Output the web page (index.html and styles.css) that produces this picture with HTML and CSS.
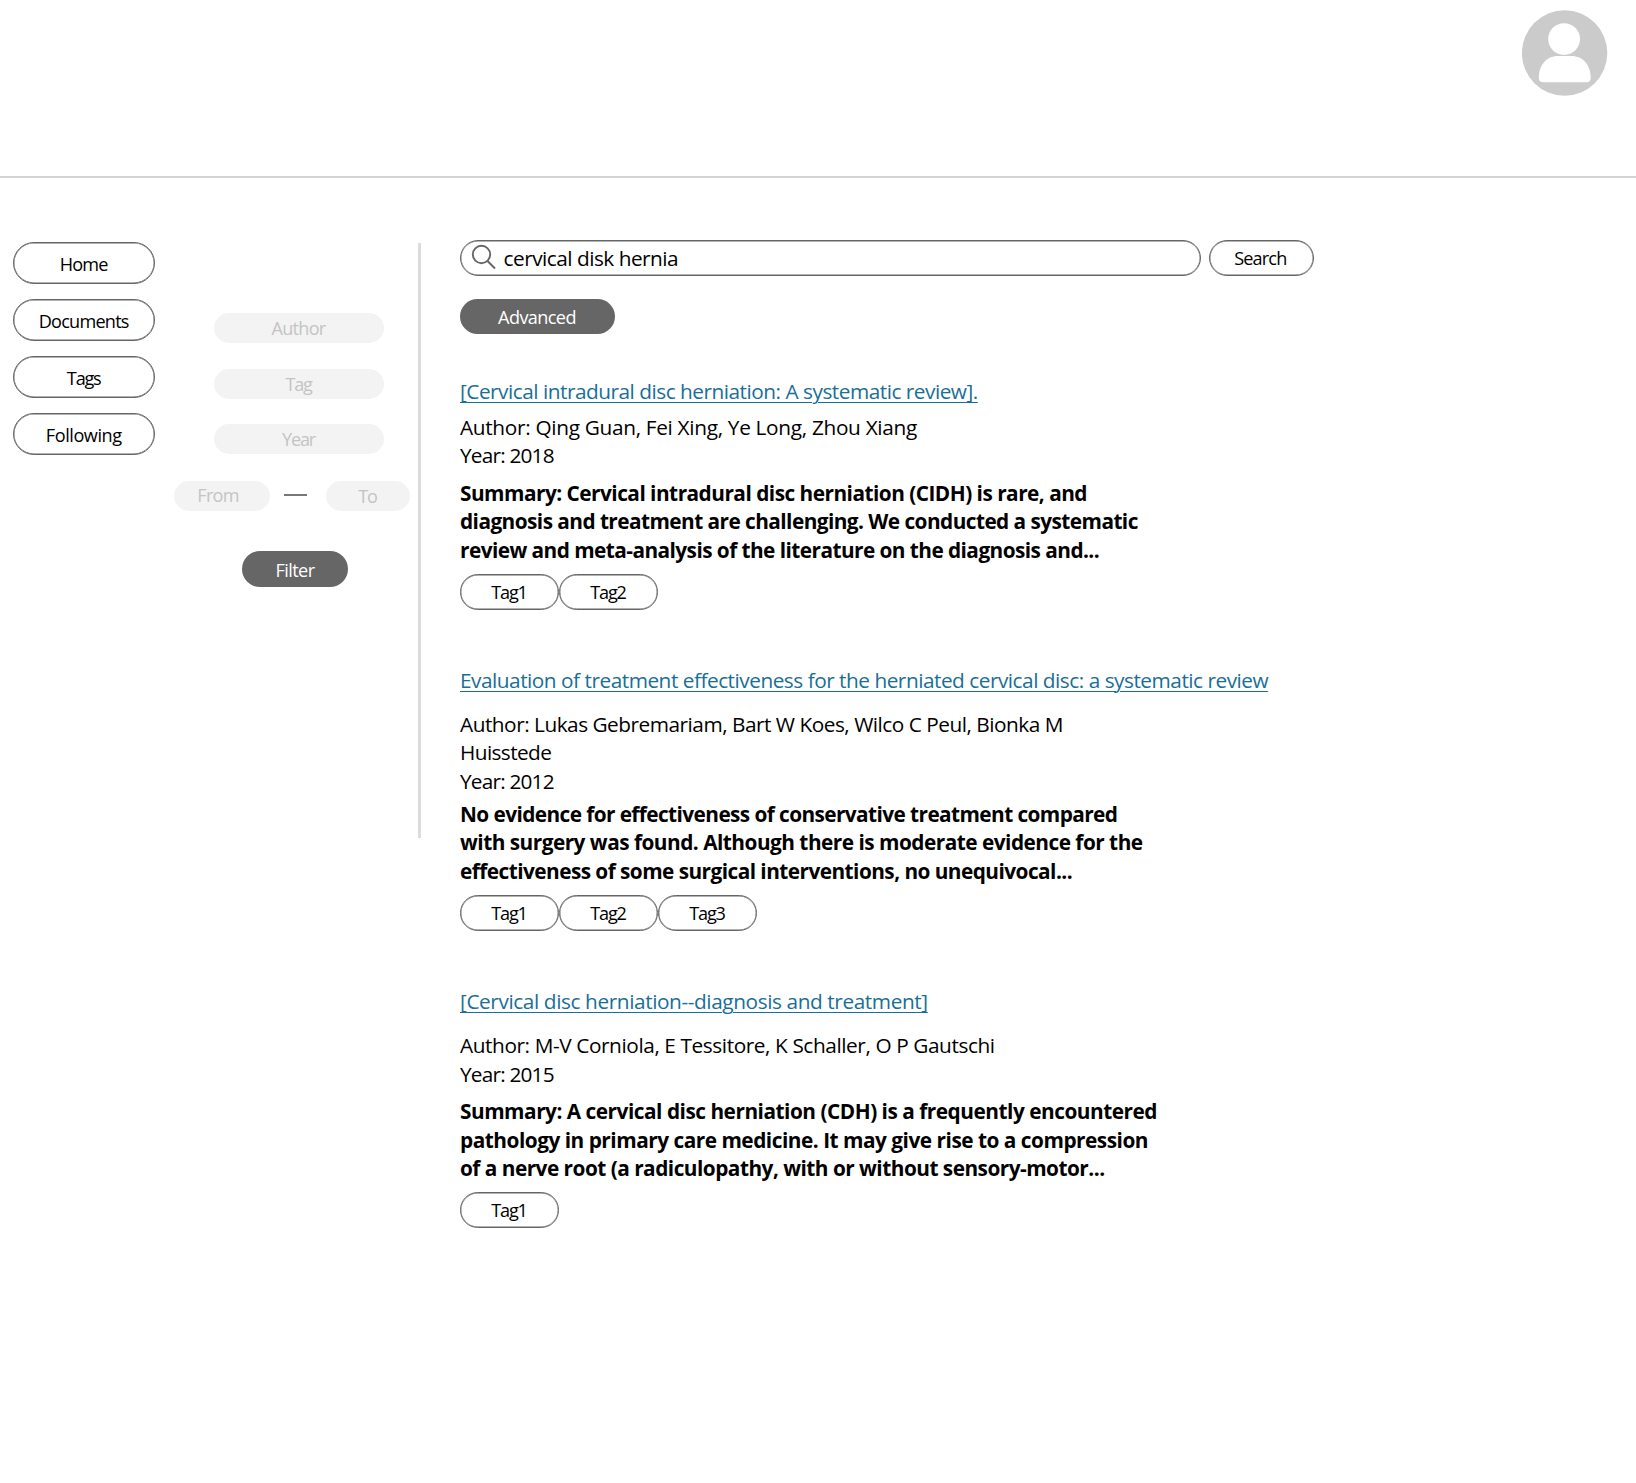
FILE: index.html
```
<!DOCTYPE html>
<html lang="en">
<head>
<meta charset="utf-8">
<title>Document search</title>
<link rel="stylesheet" href="styles.css">
</head>
<body>
<header class="topbar">
  <svg class="avatar" viewBox="0 0 86 86" aria-hidden="true">
    <circle cx="42.600" cy="43" r="42.700" fill="#cbcbcb"/>
    <circle cx="42.100" cy="29.100" r="15.900" fill="#fff"/>
    <path d="M16.800 68C16.800 55 24.500 46 36 46H49.500C61 46 68.700 55 68.700 68Q68.700 72.300 64 72.300H21.500Q16.800 72.300 16.800 68Z" fill="#fff"/>
  </svg>
</header>
<div class="layout">
  <nav class="nav">
    <a class="pill">Home</a>
    <a class="pill">Documents</a>
    <a class="pill tight">Tags</a>
    <a class="pill loose">Following</a>
  </nav>
  <aside class="filters">
    <div class="field">Author</div>
    <div class="field tight">Tag</div>
    <div class="field tight">Year</div>
    <div class="range">
      <div class="field from">From</div>
      <i class="dash"></i>
      <div class="field to tight">To</div>
    </div>
    <button class="solid filter">Filter</button>
  </aside>
  <main class="content">
    <div class="searchrow">
      <div class="searchbox">
        <svg class="glass" viewBox="0 0 26 26" aria-hidden="true"><circle cx="10.500" cy="10.500" r="8.700"/><path d="M16.500 17L24 24.500"/></svg>
        <span>cervical disk hernia</span>
      </div>
      <button class="searchbtn">Search</button>
    </div>
    <button class="solid advanced">Advanced</button>

    <article class="result first">
      <h2><a>[Cervical intradural disc herniation: A systematic review].</a></h2>
      <div class="meta"><span>Author: Qing Guan, Fei Xing, Ye Long, Zhou Xiang</span><span class="year">Year: 2018</span></div>
      <div class="summary"><span>Summary: Cervical intradural disc herniation (CIDH) is rare, and</span><span>diagnosis and treatment are challenging. We conducted a systematic</span><span>review and meta-analysis of the literature on the diagnosis and...</span></div>
      <div class="tags"><a>Tag1</a><a>Tag2</a></div>
    </article>
    <article class="result second">
      <h2><a>Evaluation of treatment effectiveness for the herniated cervical disc: a systematic review</a></h2>
      <div class="meta"><span>Author: Lukas Gebremariam, Bart W Koes, Wilco C Peul, Bionka M</span><span class="wrapped">Huisstede</span><span class="year">Year: 2012</span></div>
      <div class="summary"><span>No evidence for effectiveness of conservative treatment compared</span><span>with surgery was found. Although there is moderate evidence for the</span><span>effectiveness of some surgical interventions, no unequivocal...</span></div>
      <div class="tags"><a>Tag1</a><a>Tag2</a><a>Tag3</a></div>
    </article>
    <article class="result third">
      <h2><a>[Cervical disc herniation--diagnosis and treatment]</a></h2>
      <div class="meta"><span>Author: M-V Corniola, E Tessitore, K Schaller, O P Gautschi</span><span class="year">Year: 2015</span></div>
      <div class="summary"><span>Summary: A cervical disc herniation (CDH) is a frequently encountered</span><span>pathology in primary care medicine. It may give rise to a compression</span><span>of a nerve root (a radiculopathy, with or without sensory-motor...</span></div>
      <div class="tags"><a>Tag1</a></div>
    </article>
  </main>
</div>
</body>
</html>
```
FILE: styles.css
```
* { box-sizing: border-box; }
body { margin: 0; background: #fff; color: #000; font-family: "Open Sans", "Noto Sans", sans-serif; font-size: 18.1px; letter-spacing: -0.75px; }
button { font: inherit; letter-spacing: inherit; padding: 0; border: 0; background: none; color: #000; }
.topbar { height: 178px; border-bottom: 2px solid #d4d4d4; padding: 9.600px 28px 0 0; display: flex; justify-content: flex-end; }
.avatar { width: 86px; height: 86px; }
.layout { display: grid; grid-template-columns: 173.500px 247.500px 1fr; padding-top: 61px; align-items: start; }
.nav { display: flex; flex-direction: column; gap: 15px; padding: 3.400px 0 0 13px; width: 155.400px; }
.pill, .tags a, .searchbtn, .searchbox { border: 1px solid #666; box-shadow: inset 0 0 0 0.400px #666; display: flex; align-items: center; justify-content: center; }
.pill { height: 42px; border-radius: 21px; padding: 1px 1px 0 0; }
.tight, .tags a { letter-spacing: -1.200px; }
.loose { letter-spacing: -0.450px; }
.filters { margin-top: 3.500px; height: 595.500px; border-right: 3px solid #dcdcdc; padding-top: 70.500px; display: flex; flex-direction: column; align-items: center; }
.field { width: 170px; height: 30px; border-radius: 15px; background: #f3f3f3; color: #c4c4c4; display: flex; align-items: center; justify-content: center; margin: 0 0 25.700px 6.500px; padding: 0 1px 0 0; }
.field:first-child { padding-bottom: 1px; }
.range { display: flex; align-items: center; width: 100%; margin-top: 0.700px; }
.range .field { margin: 0; }
.range .from { width: 96px; padding-right: 7px; }
.range .to { width: 84px; }
.dash { width: 22.500px; height: 2px; background: #777; margin: 0 19.500px 2px 14.500px; }
.solid { background: #666; color: #fff; display: flex; align-items: center; justify-content: center; letter-spacing: -0.600px; }
.filter { width: 105.500px; height: 36.500px; border-radius: 18.250px; margin: 40px 1.500px 0 0; padding-top: 1px; }
.content { padding-left: 39px; }
.searchrow { display: flex; gap: 8px; padding-top: 0.600px; }
.searchbox { width: 741px; height: 36px; border-radius: 18px; justify-content: flex-start; padding: 1px 0 0 10px; gap: 6.500px; font-size: 20.800px; letter-spacing: -0.500px; }
.glass { width: 26px; height: 26px; fill: none; stroke: #666; stroke-width: 1.900; margin-bottom: 2px; }
.searchbtn { width: 104.600px; height: 36px; border-radius: 18px; letter-spacing: -0.850px; padding-right: 2px; }
.advanced { width: 155px; height: 35px; border-radius: 17.500px; margin-top: 23px; padding: 1px 1px 0 0; }
.result { font-size: 20.800px; line-height: 28.400px; padding-top: 56.200px; }
.first { padding-top: 43.400px; }
h2 { margin: 0; font-size: inherit; font-weight: 400; color: #196f97; white-space: nowrap; }
h2 a { text-decoration: underline; text-decoration-thickness: 1.300px; text-underline-offset: 2.500px; }
.meta span, .summary span { display: block; white-space: nowrap; }
.meta { margin-top: 16px; }
.first .meta { margin-top: 7.500px; }
.summary { font-weight: 700; margin-top: 9.200px; }
.second .meta { margin-top: 15.700px; }
.second .summary { margin-top: 4.800px; }
.tags { display: flex; margin-top: 10px; font-size: 18.100px; }
.tags a { width: 99px; height: 35.500px; border-radius: 17.750px; padding-right: 1px; }

/* tracking of each line of the results */
.result .year { letter-spacing: -0.800px; }
.first h2 { letter-spacing: -0.490px; }
.first .meta { letter-spacing: -0.315px; }
.first .summary { letter-spacing: -0.550px; }
.first .summary span:first-child { letter-spacing: -0.510px; }
.second h2 { letter-spacing: -0.485px; }
.second .meta { letter-spacing: -0.490px; }
.second .wrapped { letter-spacing: -0.600px; }
.second .summary { letter-spacing: -0.540px; }
.second .summary span:first-child { letter-spacing: -0.580px; }
.second .summary span:nth-child(2) { letter-spacing: -0.505px; }
.third h2 { letter-spacing: -0.405px; }
.third .meta { letter-spacing: -0.410px; }
.third .summary { letter-spacing: -0.480px; }
.third .summary span:last-child { letter-spacing: -0.510px; }
```
